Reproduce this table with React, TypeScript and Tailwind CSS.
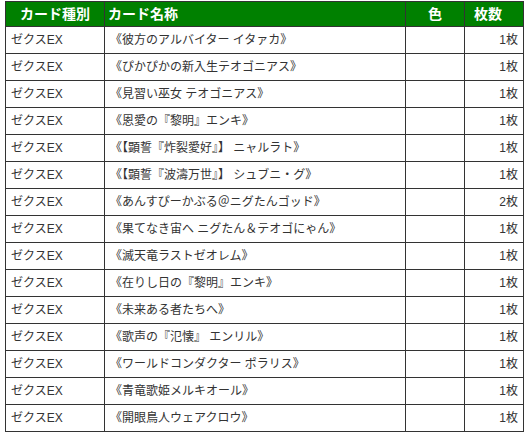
// カードリスト表（ゼクス）
const rows: [string, string, string][] = [
  ["ゼクスEX", "《彼方のアルバイター イタァカ》", "1枚"],
  ["ゼクスEX", "《ぴかぴかの新入生テオゴニアス》", "1枚"],
  ["ゼクスEX", "《見習い巫女 テオゴニアス》", "1枚"],
  ["ゼクスEX", "《恩愛の『黎明』エンキ》", "1枚"],
  ["ゼクスEX", "《【顕誓『炸裂愛好』】 ニャルラト》", "1枚"],
  ["ゼクスEX", "《【顕誓『波濤万世』】 シュブニ・グ》", "1枚"],
  ["ゼクスEX", "《あんすぴーかぶる＠ニグたんゴッド》", "2枚"],
  ["ゼクスEX", "《果てなき宙へ ニグたん＆テオゴにゃん》", "1枚"],
  ["ゼクスEX", "《滅天竜ラストゼオレム》", "1枚"],
  ["ゼクスEX", "《在りし日の『黎明』エンキ》", "1枚"],
  ["ゼクスEX", "《未来ある者たちへ》", "1枚"],
  ["ゼクスEX", "《歌声の『氾懐』 エンリル》", "1枚"],
  ["ゼクスEX", "《ワールドコンダクター ポラリス》", "1枚"],
  ["ゼクスEX", "《青竜歌姫メルキオール》", "1枚"],
  ["ゼクスEX", "《開眼鳥人ウェアクロウ》", "1枚"],
];

const cell = "border border-[#333333] px-[5px] h-[27px]";
const head = "border border-[#333333] h-[25px]";

export default function App() {
  return (
    <div className="bg-white w-[528px] h-[438px] pt-px pl-[5px] font-['Liberation_Sans','Noto_Sans_CJK_JP',sans-serif] text-[#333333]">
      <table className="border-collapse table-fixed w-[518px] text-[12px]">
        <colgroup>
          <col className="w-[99px]" />
          <col className="w-[301px]" />
          <col className="w-[59px]" />
          <col className="w-[59px]" />
        </colgroup>
        <thead>
          <tr className="bg-[#008000] text-white text-[14px] font-bold">
            <th className={`${head} text-left`}>
              <span className="block pl-[14px]">カード種別</span>
            </th>
            <th className={`${head} text-left`}>
              <span className="block pl-[3px]">カード名称</span>
            </th>
            <th className={`${head} text-center`}>色</th>
            <th className={`${head} text-left`}>
              <span className="block pl-[9px]">枚数</span>
            </th>
          </tr>
        </thead>
        <tbody>
          {rows.map(([kind, name, count], i) => (
            <tr key={i}>
              <td className={cell}>{kind}</td>
              <td className={cell}>{name}</td>
              <td className={cell}></td>
              <td className={`${cell} text-right`}>{count}</td>
            </tr>
          ))}
        </tbody>
      </table>
    </div>
  );
}
